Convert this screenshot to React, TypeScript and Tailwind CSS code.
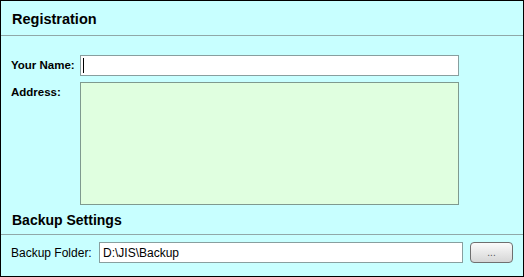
import React from 'react';

export default function App() {
  const [name, setName] = React.useState('');
  const [address, setAddress] = React.useState('');
  const [folder, setFolder] = React.useState('D:\\JIS\\Backup');

  return (
    <div
      className="w-[524px] h-[277px] border border-black bg-[#c8ffff] flex flex-col text-black"
      style={{ fontFamily: '"Liberation Sans", Arial, sans-serif' }}
    >
      {/* Registration header */}
      <div className="h-[35px] shrink-0 flex items-center px-[11px] pt-[3px] border-b border-[#90a8a8]">
        <h2 className="text-[14.5px] font-bold">Registration</h2>
      </div>

      <div className="pt-[19px] px-[10px]">
        <div className="flex items-center">
          <label className="w-[69px] text-[11.5px] font-bold">Your Name:</label>
          <div className="relative flex">
            <input
              autoFocus
              value={name}
              onChange={(e) => setName(e.target.value)}
              className="block w-[379px] h-[21px] bg-white border border-[#889f9f] px-[3px] text-[12px] outline-none caret-black"
            />
            {/* text caret as in the screenshot */}
            {name === '' && <span className="pointer-events-none absolute left-[3px] top-[3px] w-px h-[15px] bg-black" />}
          </div>
        </div>
        <div className="flex items-start mt-[6px]">
          <label className="w-[69px] text-[11.5px] font-bold pt-[2px]">Address:</label>
          <textarea
            value={address}
            onChange={(e) => setAddress(e.target.value)}
            className="block w-[379px] h-[123px] bg-[#e0ffe0] border border-[#7f9a8f] resize-none outline-none px-[3px] text-[12px]"
          />
        </div>
      </div>

      {/* Backup Settings header */}
      <div className="h-[30px] shrink-0 flex items-center px-[11px] pt-[2px] border-b border-[#90a8a8]">
        <h2 className="text-[14px] font-bold">Backup Settings</h2>
      </div>

      <div className="pt-[7px] px-[10px] flex items-center">
        <label className="w-[88px] text-[12px]">Backup Folder:</label>
        <input
          value={folder}
          onChange={(e) => setFolder(e.target.value)}
          className="w-[364px] h-[21px] bg-white border border-[#889f9f] px-[3px] text-[12px] outline-none"
        />
        <button className="ml-[7px] w-[43px] h-[21px] rounded-[4px] border border-[#6f6f6f] bg-gradient-to-b from-[#fbfbfb] to-[#d6d6d6] text-[10px] text-[#555] leading-none">
          ...
        </button>
      </div>
    </div>
  );
}
